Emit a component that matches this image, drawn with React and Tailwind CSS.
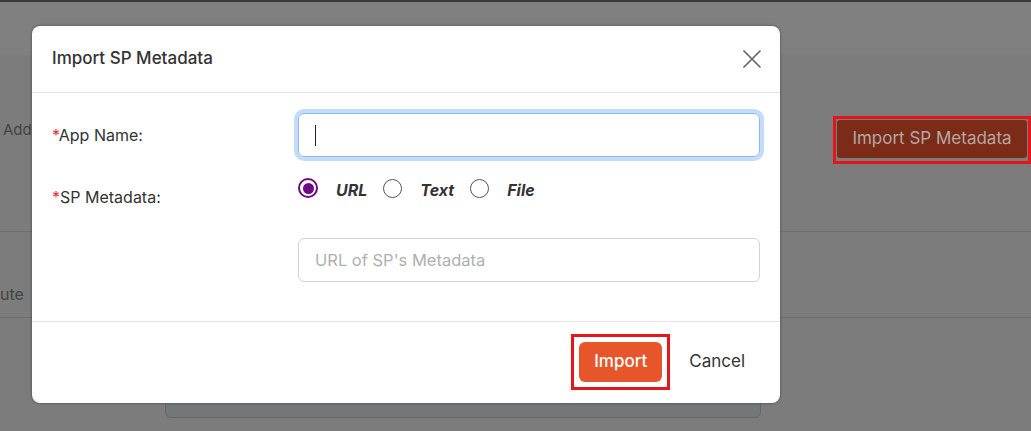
import React, { useState } from "react";

function Radio({ checked, label, onClick }) {
  return (
    <label onClick={onClick} className="flex items-center cursor-pointer">
      {checked ? (
        <span className="flex h-[20px] w-[20px] items-center justify-center rounded-full border-2 border-[#6b0a82] bg-white">
          <span className="h-[11px] w-[11px] rounded-full bg-[#6b0a82]" />
        </span>
      ) : (
        <span className="h-[19px] w-[19px] rounded-full border-[1.5px] border-[#555] bg-white" />
      )}
      <span className="ml-[18px] pt-[3px] text-[16px] font-bold italic text-[#333]">{label}</span>
    </label>
  );
}

export default function App() {
  const [source, setSource] = useState("url");
  const [appName, setAppName] = useState("");

  return (
    <div className="relative h-[431px] w-[1031px] overflow-hidden bg-[#7c7c7c] font-['Inter',sans-serif]">
      {/* page behind the dialog (already dimmed) */}
      <div className="h-[55px] border-t-2 border-[#3a3a3a] bg-[#808080]" />
      <div className="flex h-[177px] border-b border-[#6e6e6e]">
        <div className="flex-1 pl-[3px] pt-[64px] text-[15px] text-[#444]">Add</div>
        <div className="mt-[61px] h-[48px] border-[3px] border-[#e3161c] p-[1px]">
          <div className="flex h-[38px] w-[190px] items-center justify-center rounded-[3px] bg-[#7b2b17] text-[17px] text-[#b3a8a4]">
            Import SP Metadata
          </div>
        </div>
      </div>
      <div className="h-[86px] border-b border-[#6e6e6e] pt-[54px] text-[16px] leading-none text-[#444]">
        ute
      </div>
      <div className="ml-[165px] mt-[80px] h-[20px] w-[596px] rounded-b-md border border-[#666] bg-[#737777]" />

      {/* dialog */}
      <div className="absolute left-[32px] top-[26px] flex h-[377px] w-[748px] flex-col rounded-lg bg-white shadow-[0_0_3px_rgba(0,0,0,0.45)]">
        <div className="flex h-[67px] items-center justify-between border-b border-[#e4e4e4] pl-5 pr-[18px]">
          <h2 className="text-[17px] font-medium text-[#333]">Import SP Metadata</h2>
          <button className="text-[#666]">
            <svg width="20" height="20" viewBox="0 0 20 20" fill="none" stroke="currentColor" strokeWidth="1.7" strokeLinecap="round">
              <path d="M2 2 L18 18 M18 2 L2 18" />
            </svg>
          </button>
        </div>

        <div className="flex flex-1 flex-col border-b border-[#e4e4e4] px-5 pt-5">
          <div className="flex items-center">
            <div className="w-[246px] text-[16px] text-[#333]">
              <span className="text-[#e0323a]">*</span>App Name:
            </div>
            <div className="relative flex-1">
              <input
                autoFocus
                value={appName}
                onChange={(e) => setAppName(e.target.value)}
                className="h-[44px] w-full rounded-md border border-[#8fb8ef] px-4 text-[16px] text-[#333] shadow-[0_0_0_4px_#c4dbfa] outline-none caret-transparent"
              />
              {appName === "" && (
                <span className="pointer-events-none absolute left-[17px] top-[12px] h-[21px] w-px bg-[#222]" />
              )}
            </div>
          </div>

          <div className="mt-[21px] flex items-start">
            <div className="w-[246px] pt-[9px] text-[16px] leading-[20px] text-[#333]">
              <span className="text-[#e0323a]">*</span>SP Metadata:
            </div>
            <div className="flex h-[20px] items-center gap-[16px]">
              <Radio checked={source === "url"} label="URL" onClick={() => setSource("url")} />
              <Radio checked={source === "text"} label="Text" onClick={() => setSource("text")} />
              <Radio checked={source === "file"} label="File" onClick={() => setSource("file")} />
            </div>
          </div>

          <div className="mt-[31px] flex">
            <div className="w-[246px]" />
            <input
              placeholder="URL of SP's Metadata"
              className="h-[44px] flex-1 rounded-md border border-[#d4d4d4] px-4 text-[16.5px] text-[#333] outline-none placeholder:text-[#b0b0b0]"
            />
          </div>
        </div>

        <div className="flex h-[81px] items-center justify-end gap-[3px] pb-[2px] pr-[19px]">
          <div className="border-[3px] border-[#e3161c] p-[5px]">
            <button className="h-[40px] w-[83px] rounded-md bg-[#e6562a] text-[17px] font-medium text-white">
              Import
            </button>
          </div>
          <button className="px-4 text-[17px] text-[#333]">Cancel</button>
        </div>
      </div>
    </div>
  );
}
